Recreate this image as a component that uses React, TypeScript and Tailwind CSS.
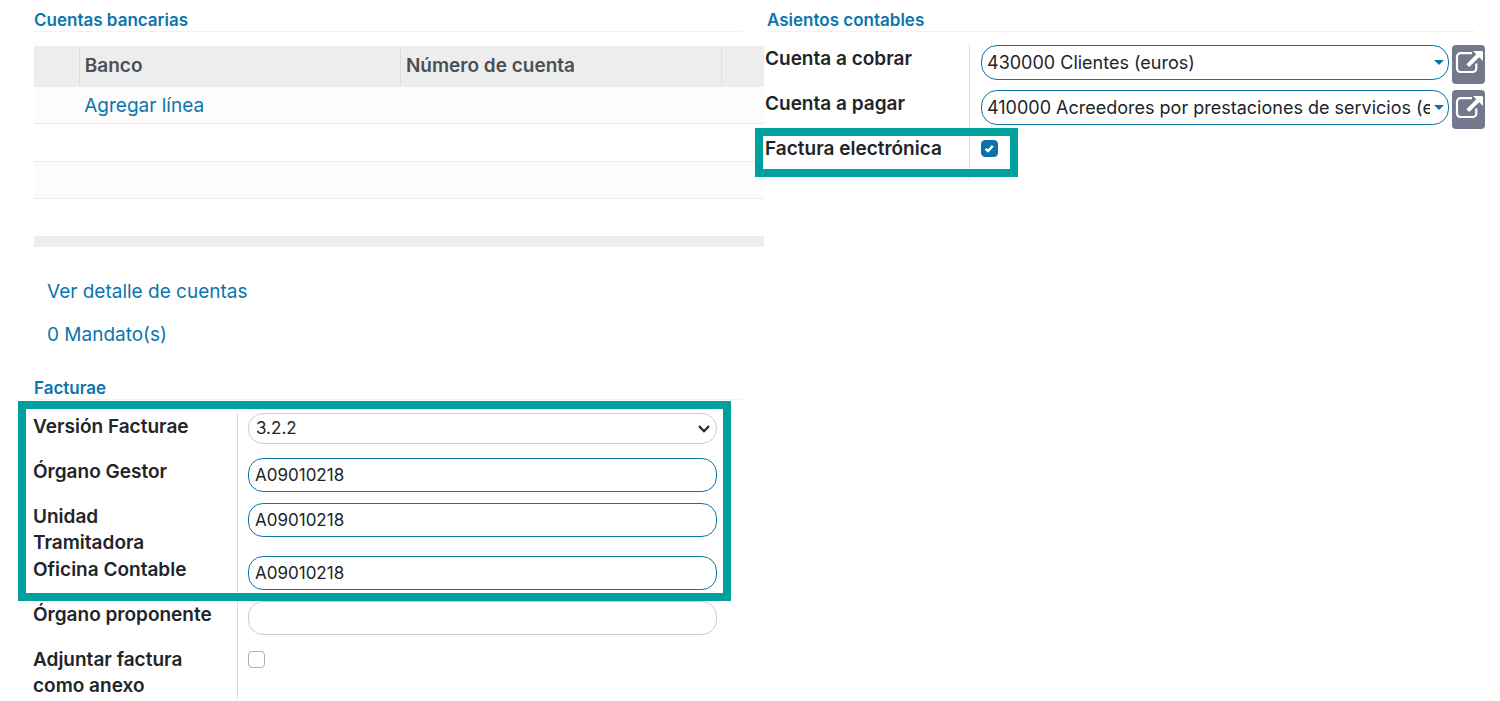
import type { ReactNode } from 'react';

const accent = 'border-[#0b73a8]';

function Heading({ children }: { children: ReactNode }) {
  return (
    <h2 className="border-b border-[#f2f2f2] pt-[2px] text-[17px] leading-[21px] font-semibold text-[#0b76ad]">
      {children}
    </h2>
  );
}

function Row({ label, htmlFor, children }: { label: ReactNode; htmlFor: string; children: ReactNode }) {
  return (
    <div className="grid min-h-[45px] grid-cols-[204px_minmax(0,1fr)]">
      <label htmlFor={htmlFor} className="pt-px text-[19px] leading-[26px] font-semibold text-[#212529]">
        {label}
      </label>
      <div className="border-l border-[#d9dcdf] pl-[10px]">{children}</div>
    </div>
  );
}

function TextField({ id, value = '' }: { id: string; value?: string }) {
  return (
    <input
      id={id}
      type="text"
      defaultValue={value}
      className={`block h-[34px] w-full rounded-[15px] border bg-white px-[6px] text-[17px] text-[#212529] outline-none ${
        value ? accent : 'border-[#cccccc]'
      }`}
    />
  );
}

function Check({ id, checked = false }: { id: string; checked?: boolean }) {
  return (
    <span className="relative mt-[5px] block size-[17px]">
      <input
        id={id}
        type="checkbox"
        defaultChecked={checked}
        className="peer block size-[17px] appearance-none rounded-[4px] border border-[#adb0bb] bg-white checked:border-[#0b73a8] checked:bg-[#0b73a8]"
      />
      <svg
        viewBox="0 0 17 17"
        className="pointer-events-none absolute inset-0 hidden size-[17px] peer-checked:block"
        fill="none"
        stroke="white"
        strokeWidth="2.4"
      >
        <path d="M4.6 8.8l2.4 2.3 4.8-5.2" />
      </svg>
    </span>
  );
}

function AccountField({ id, value }: { id: string; value: string }) {
  return (
    <div className="flex items-start gap-[3px] pl-px">
      <div className={`flex h-[35px] min-w-0 flex-1 items-center rounded-[16px] border bg-white pl-[5px] ${accent}`}>
        <input
          id={id}
          type="text"
          defaultValue={value}
          className="min-w-0 flex-1 bg-transparent text-[18px] text-[#212529] outline-none"
        />
        <button type="button" aria-label="Mostrar opciones" className="flex w-[18px] justify-center">
          <svg viewBox="0 0 10 5" className="h-[5px] w-[10px]" fill="#0b73a8">
            <path d="M0 0h10L5 5z" />
          </svg>
        </button>
      </div>
      <button type="button" aria-label="Abrir registro" className="h-[39px] w-[33px] rounded-[4px] bg-[#74788d]">
        <svg viewBox="0 0 33 39" className="h-[39px] w-[33px]" fill="none" stroke="white">
          <path
            strokeWidth="2.2"
            d="M20 8.2H8.5A3.500 3.500 0 0 0 5 11.700v11.800A3.500 3.500 0 0 0 8.500 27h12.300a3.500 3.500 0 0 0 3.500-3.500V18.500"
          />
          <path strokeWidth="6" stroke="#74788d" d="M15.500 20.500L27 9" />
          <path strokeWidth="4" d="M15.800 20.700L27 9.500" />
          <path fill="white" stroke="none" d="M21 6h9q1 0 1 1v9z" />
        </svg>
      </button>
    </div>
  );
}

function BankTable() {
  const th = 'px-[5px] pt-[2px] text-left text-[19px] font-semibold text-[#495057]';
  const divided = `${th} border-l border-[#dcdee0]`;
  const line = 'border-b border-[#e7e9eb]';
  return (
    <table className="ml-px w-[calc(100%-1px)] table-fixed border-collapse">
      <colgroup>
        <col className="w-[6.2%]" />
        <col className="w-[44%]" />
        <col className="w-[44%]" />
        <col />
      </colgroup>
      <thead>
        <tr className="h-[40px] border-b-2 border-[#e9ecef] bg-[#ededed]">
          <th className={th} />
          <th className={divided}>Banco</th>
          <th className={divided}>Número de cuenta</th>
          <th className={divided} />
        </tr>
      </thead>
      <tbody>
        <tr className={`h-[37px] bg-[#fcfcfc] ${line}`}>
          <td />
          <td colSpan={3} className="px-[5px] pt-[2px] text-[19px]">
            <a href="#agregar" className="text-[#0b76ad]">
              Agregar línea
            </a>
          </td>
        </tr>
        <tr className={`h-[38px] ${line}`}>
          <td colSpan={4} />
        </tr>
        <tr className={`h-[37px] bg-[#fcfcfc] ${line}`}>
          <td colSpan={4} />
        </tr>
        <tr className="h-[38px]">
          <td colSpan={4} />
        </tr>
      </tbody>
      <tfoot>
        <tr className="h-[11px] bg-[#ededed]">
          <td colSpan={4} />
        </tr>
      </tfoot>
    </table>
  );
}

export default function App() {
  return (
    <main className="grid grid-cols-[731fr_720fr] gap-x-px bg-white pt-2 pr-[15px] pl-[33px] font-['Inter',sans-serif] text-[19px]">
      <div>
        <section>
          <div className="mr-[22px] mb-[14px] ml-px">
            <Heading>Cuentas bancarias</Heading>
          </div>
          <BankTable />
          <div className="mt-8 ml-[14px] flex flex-col items-start gap-[17px] leading-[26px] text-[#0b76ad]">
            <a href="#cuentas">Ver detalle de cuentas</a>
            <a href="#mandatos">0 Mandato(s)</a>
          </div>
        </section>

        <section className="mt-7">
          <div className="mr-[22px] mb-[13px] ml-px">
            <Heading>Facturae</Heading>
          </div>
          <div className="mr-[47px]">
            <div className="relative">
              <Row label="Versión Facturae" htmlFor="version">
                <div className="relative">
                  <select
                    id="version"
                    defaultValue="3.2.2"
                    className="block h-[31px] w-full appearance-none rounded-[15px] border border-[#cccccc] bg-white px-[7px] text-[17px] text-[#212529]"
                  >
                    <option>3.2.2</option>
                  </select>
                  <svg
                    viewBox="0 0 12 8"
                    className="pointer-events-none absolute top-[12px] right-[7px] h-[8px] w-[12px]"
                    fill="none"
                    stroke="#1b1e21"
                    strokeWidth="2"
                  >
                    <path d="M1 1l5 5.2L11 1" />
                  </svg>
                </div>
              </Row>
              <Row label="Órgano Gestor" htmlFor="gestor">
                <TextField id="gestor" value="A09010218" />
              </Row>
              <Row
                label={
                  <>
                    Unidad
                    <br />
                    Tramitadora
                  </>
                }
                htmlFor="unidad"
              >
                <TextField id="unidad" value="A09010218" />
              </Row>
              <Row label="Oficina Contable" htmlFor="oficina">
                <TextField id="oficina" value="A09010218" />
              </Row>
              <div className="pointer-events-none absolute -top-[12px] -right-[14px] bottom-0 -left-[15px] border-8 border-[#00a19c]" />
            </div>
            <Row label="Órgano proponente" htmlFor="proponente">
              <TextField id="proponente" />
            </Row>
            <Row label="Adjuntar factura como anexo" htmlFor="adjuntar">
              <Check id="adjuntar" />
            </Row>
          </div>
        </section>
      </div>

      <section>
        <div className="mr-[10px] mb-[13px] ml-[2px]">
          <Heading>Asientos contables</Heading>
        </div>
        <Row label="Cuenta a cobrar" htmlFor="cobrar">
          <AccountField id="cobrar" value="430000 Clientes (euros)" />
        </Row>
        <Row label="Cuenta a pagar" htmlFor="pagar">
          <AccountField id="pagar" value="410000 Acreedores por prestaciones de servicios (euros)" />
        </Row>
        <div className="relative">
          <Row label="Factura electrónica" htmlFor="electronica">
            <div className="pl-px">
              <Check id="electronica" checked />
            </div>
          </Row>
          <div className="pointer-events-none absolute -top-[7px] -left-[10px] h-[49px] w-[263px] border-8 border-[#00a19c]" />
        </div>
      </section>
    </main>
  );
}
